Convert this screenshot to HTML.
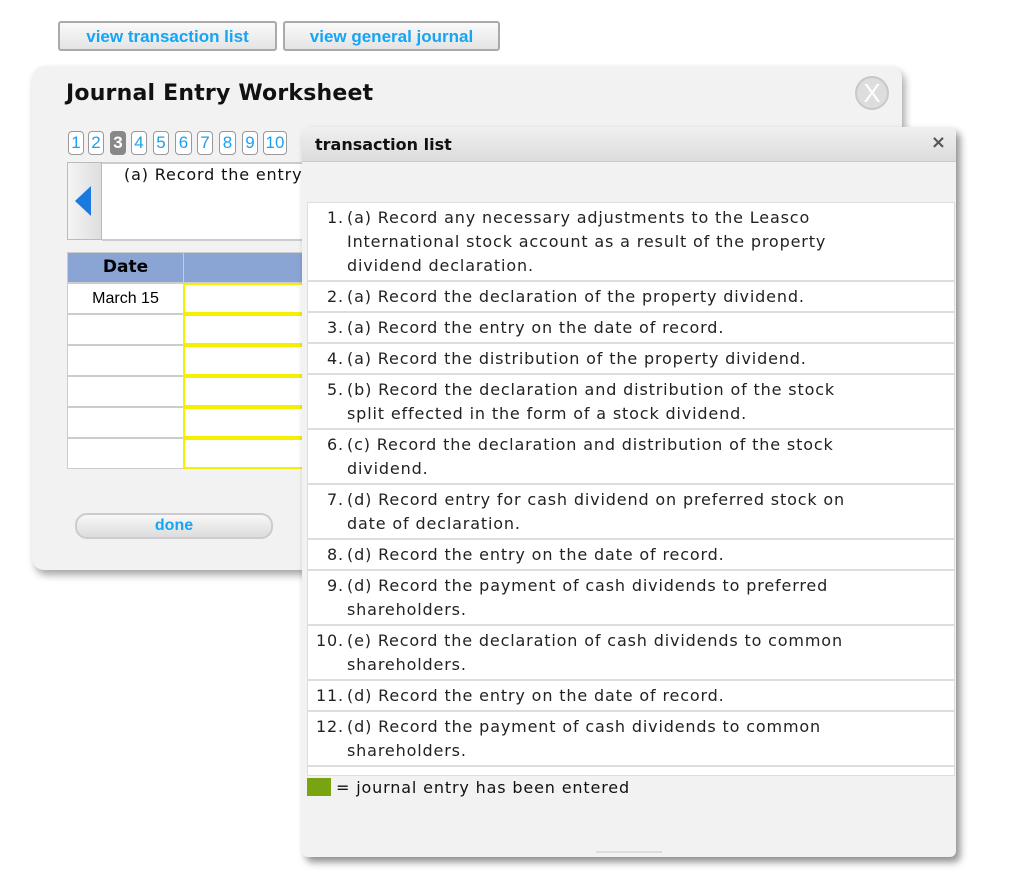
<!DOCTYPE html>
<html><head><meta charset="utf-8"><style>
*{box-sizing:border-box;margin:0;padding:0}
body{width:1024px;height:878px;background:#fff;position:relative;overflow:hidden;font-family:"DejaVu Sans",Verdana,sans-serif}
.abs{position:absolute}
.btn{position:absolute;top:21px;height:30px;border:2px solid #aaa;border-radius:3px;background:linear-gradient(#fafafa,#e4e4e4);color:#14a5f5;font:bold 17px "Liberation Sans",Arial,sans-serif;text-align:center;line-height:28px}
#ws{left:32px;top:66px;width:870px;height:504px;background:#f2f2f2;border-radius:12px;box-shadow:3px 5px 8px rgba(0,0,0,.35)}
.pg{position:absolute;top:131px;height:24px;border:1.5px solid #999;border-radius:4px;background:#fff;color:#1aa0f0;font:17px "Liberation Sans",Arial,sans-serif;text-align:center;line-height:21px}
.c1,.c2{position:absolute;height:31px;background:#fff}
.c1{left:67px;width:117px;border:1px solid #ccc;font:16px "Liberation Sans",Arial,sans-serif;text-align:center;line-height:29px}
.c2{left:183px;width:140px;border:2px solid #f4f000}
#pop{left:302px;top:127px;width:654px;height:730px;background:#f2f2f2;border-radius:6px;box-shadow:4px 5px 8px rgba(0,0,0,.45)}
.row{border-bottom:2px solid #ddd;padding:3px 0 2px 39px;position:relative;font-size:16px;line-height:24px;color:#222;letter-spacing:0.85px;white-space:nowrap}
.row b{position:absolute;left:6px;font-weight:normal;width:33px;text-align:right;padding-right:3px}
</style></head><body>
<div class="btn" style="left:58px;width:219px">view transaction list</div>
<div class="btn" style="left:283px;width:217px">view general journal</div>

<div id="ws" class="abs"></div>
<div class="abs" style="left:66px;top:81px;font:bold 22px 'DejaVu Sans',sans-serif;color:#111;letter-spacing:0.2px">Journal Entry Worksheet</div>
<div class="abs" style="left:855px;top:76px;width:34px;height:34px;border-radius:50%;background:#ddd;border:2px solid #c8c8c8;color:#fff;font:26px 'Liberation Sans',sans-serif;text-align:center;line-height:30px">X</div>

<div class="pg" style="left:68px;width:16px">1</div>
<div class="pg" style="left:88px;width:16px">2</div>
<div class="pg" style="left:110px;width:16px;background:#888;border-color:#888;color:#fff;font-weight:bold">3</div>
<div class="pg" style="left:131px;width:16px">4</div>
<div class="pg" style="left:153px;width:16px">5</div>
<div class="pg" style="left:175px;width:17px">6</div>
<div class="pg" style="left:197px;width:16px">7</div>
<div class="pg" style="left:219px;width:17px">8</div>
<div class="pg" style="left:242px;width:16px">9</div>
<div class="pg" style="left:263px;width:24px">10</div>

<div class="abs" style="left:67px;top:162px;width:35px;height:78px;background:linear-gradient(90deg,#f4f4f4,#dedede);border:1px solid #bbb"></div>
<div class="abs" style="left:75px;top:186px;width:0;height:0;border-top:15px solid transparent;border-bottom:15px solid transparent;border-right:16px solid #1a78e0"></div>
<div class="abs" style="left:102px;top:162px;width:220px;height:79px;background:#fff;border:2px solid #ccc;border-left:none"></div>
<div class="abs" style="left:124px;top:165px;font-size:16px;color:#111;letter-spacing:0.85px;white-space:nowrap">(a) Record the entry</div>

<div class="c1" style="top:252px;background:#8aa5d4;font:bold 17px 'DejaVu Sans',sans-serif;line-height:29px">Date</div>
<div class="abs" style="left:183px;top:252px;width:140px;height:31px;background:#8aa5d4;border:1px solid #ccc"></div>
<div class="c1" style="top:283px">March 15</div><div class="c2" style="top:283px"></div>
<div class="c1" style="top:314px"></div><div class="c2" style="top:314px"></div>
<div class="c1" style="top:345px"></div><div class="c2" style="top:345px"></div>
<div class="c1" style="top:376px"></div><div class="c2" style="top:376px"></div>
<div class="c1" style="top:407px"></div><div class="c2" style="top:407px"></div>
<div class="c1" style="top:438px"></div><div class="c2" style="top:438px"></div>
<div class="abs" style="left:75px;top:513px;width:198px;height:26px;border:2px solid #ccc;border-radius:12px;background:linear-gradient(#f8f8f8,#dcdcdc);color:#14a5f5;font:bold 16px 'Liberation Sans',sans-serif;text-align:center;line-height:22px">done</div>

<div id="pop" class="abs">
 <div style="height:35px;background:linear-gradient(#f0f0f0,#dcdcdc);border-radius:6px 6px 0 0;border-bottom:1px solid #ccc;padding-left:13px;font:bold 16px 'DejaVu Sans',sans-serif;line-height:36px;color:#111">transaction list<span style="position:absolute;right:10px;top:-2px;color:#555;font-size:18px">×</span></div>
 <div style="position:absolute;left:5px;top:75px;width:648px;height:574px;background:#fff;border:1px solid #ddd;overflow:hidden">
  <div class="row"><b>1.</b>(a) Record any necessary adjustments to the Leasco<br>International stock account as a result of the property<br>dividend declaration.</div>
  <div class="row"><b>2.</b>(a) Record the declaration of the property dividend.</div>
  <div class="row"><b>3.</b>(a) Record the entry on the date of record.</div>
  <div class="row"><b>4.</b>(a) Record the distribution of the property dividend.</div>
  <div class="row"><b>5.</b>(b) Record the declaration and distribution of the stock<br>split effected in the form of a stock dividend.</div>
  <div class="row"><b>6.</b>(c) Record the declaration and distribution of the stock<br>dividend.</div>
  <div class="row"><b>7.</b>(d) Record entry for cash dividend on preferred stock on<br>date of declaration.</div>
  <div class="row"><b>8.</b>(d) Record the entry on the date of record.</div>
  <div class="row"><b>9.</b>(d) Record the payment of cash dividends to preferred<br>shareholders.</div>
  <div class="row"><b>10.</b>(e) Record the declaration of cash dividends to common<br>shareholders.</div>
  <div class="row"><b>11.</b>(d) Record the entry on the date of record.</div>
  <div class="row"><b>12.</b>(d) Record the payment of cash dividends to common<br>shareholders.</div>
 </div>
 <div style="position:absolute;left:5px;top:651px;width:24px;height:18px;background:#7aa312"></div>
 <div style="position:absolute;left:34px;top:651px;font-size:16px;color:#111;letter-spacing:0.85px">= journal entry has been entered</div>
 <div style="position:absolute;left:294px;top:724px;width:66px;height:2px;background:#ddd"></div>
</div>
</body></html>
